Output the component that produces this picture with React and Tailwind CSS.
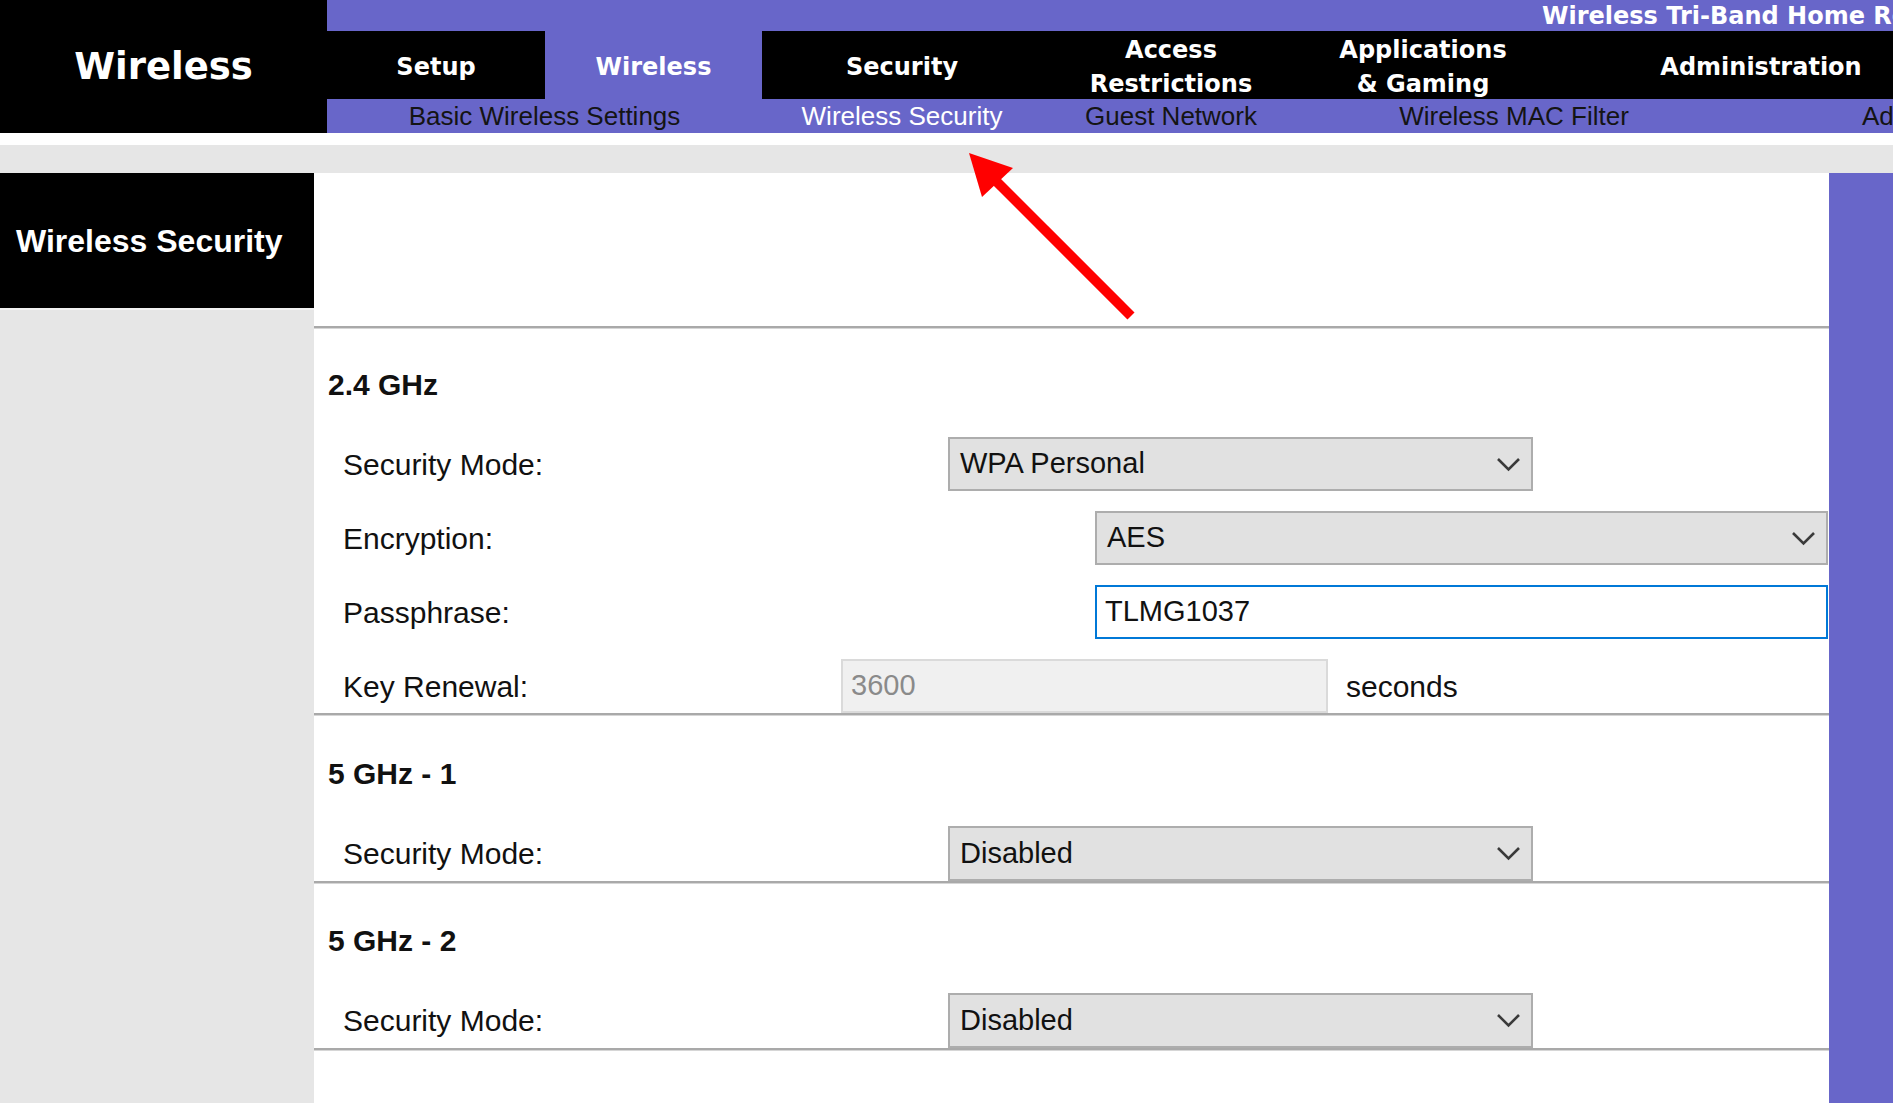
import React from "react";

const PURPLE = "bg-[#6866c9]";

function Chevron() {
  return (
    <svg width="25" height="15" viewBox="0 0 25 15" className="shrink-0">
      <polyline points="2,2 12.5,12.5 23,2" fill="none" stroke="#3a3a3a" strokeWidth="2.6" />
    </svg>
  );
}

function Select({ value, width, height = "h-[54px]" }) {
  return (
    <div
      className={`${width} ${height} border-2 border-[#adadad] bg-[#e1e1e1] flex items-center justify-between pl-[10px] pr-[10px] text-[29px] text-[#111]`}
    >
      <span>{value}</span>
      <Chevron />
    </div>
  );
}

function Line() {
  return <div className="h-[3px] bg-[#a9a9a9] border-b border-[#d6d6d6]" />;
}

function Title({ children, pt = "pt-[36px]" }) {
  return (
    <div className={`${pt} pl-[14px] leading-[40px] text-[30px] font-bold text-[#111]`}>{children}</div>
  );
}

function Label({ children, w }) {
  return <div className={`${w} shrink-0 pl-[29px] text-[30px] text-[#111]`}>{children}</div>;
}

export default function App() {
  return (
    <div
      className="relative w-[1893px] h-[1103px] overflow-hidden bg-white"
      style={{ fontFamily: '"Liberation Sans", Arial, sans-serif' }}
    >
      {/* Header */}
      <div className="flex h-[133px]">
        <div className="w-[327px] shrink-0 bg-black flex items-center justify-center">
          <span
            className="text-white text-[37px] font-bold"
            style={{ fontFamily: '"DejaVu Sans", Verdana, sans-serif' }}
          >
            Wireless
          </span>
        </div>
        <div className="flex-1 flex flex-col overflow-hidden">
          <div
            className={`h-[31px] ${PURPLE} pl-[1215px] whitespace-nowrap text-white text-[24px] font-bold leading-[33px]`}
            style={{ fontFamily: '"DejaVu Sans", Verdana, sans-serif' }}
          >
            Wireless Tri-Band Home Router
          </div>
          <div
            className="h-[68px] flex bg-black text-white text-[24px] font-bold leading-[34px] text-center whitespace-nowrap"
            style={{ fontFamily: '"DejaVu Sans", Verdana, sans-serif' }}
          >
            <div className="w-[218px] shrink-0 flex items-center justify-center bg-black pt-[4px]">Setup</div>
            <div className={`w-[217px] shrink-0 flex items-center justify-center pt-[4px] ${PURPLE}`}>Wireless</div>
            <div className="w-[280px] shrink-0 flex items-center justify-center pt-[4px]">Security</div>
            <div className="w-[258px] shrink-0 flex flex-col items-center justify-center pt-[4px]">
              <span>Access</span>
              <span>Restrictions</span>
            </div>
            <div className="w-[246px] shrink-0 flex flex-col items-center justify-center pt-[4px]">
              <span>Applications</span>
              <span>&amp; Gaming</span>
            </div>
            <div className="w-[430px] shrink-0 flex items-center justify-center pt-[4px]">Administration</div>
          </div>
          <div className={`h-[34px] ${PURPLE} flex items-center text-[26px] text-[#141414] whitespace-nowrap`}>
            <div className="w-[435px] shrink-0 text-center">Basic Wireless Settings</div>
            <div className="w-[280px] shrink-0 text-center text-white">Wireless Security</div>
            <div className="w-[258px] shrink-0 text-center">Guest Network</div>
            <div className="w-[428px] shrink-0 text-center">Wireless MAC Filter</div>
            <div className="shrink-0 pl-[134px]">Advanced Wireless Settings</div>
          </div>
        </div>
      </div>
      <div className="h-[12px] bg-white" />
      <div className="h-[28px] bg-[#e6e6e6]" />

      {/* Body */}
      <div className="flex h-[930px]">
        <div className="w-[314px] shrink-0 bg-[#e6e6e6] flex flex-col">
          <div className="h-[137px] bg-black flex items-center pl-[16px] border-b-2 border-[#f2f2f2]">
            <span className="text-white text-[32px] font-bold">Wireless Security</span>
          </div>
        </div>

        <div className="flex-1 bg-white flex flex-col">
          <div className="h-[153px]" />
          <Line />
          <Title>2.4 GHz</Title>
          <div className="mt-[32px] flex flex-col gap-[20px]">
            <div className="flex items-center h-[54px]">
              <Label w="w-[634px]">Security Mode:</Label>
              <Select value="WPA Personal" width="w-[585px]" />
            </div>
            <div className="flex items-center h-[54px]">
              <Label w="w-[781px]">Encryption:</Label>
              <Select value="AES" width="w-[733px]" />
            </div>
            <div className="flex items-center h-[54px]">
              <Label w="w-[781px]">Passphrase:</Label>
              <div className="w-[733px] h-[54px] border-2 border-[#0078d7] bg-white flex items-center pl-[8px] text-[29px] text-[#111]">
                TLMG1037
              </div>
            </div>
            <div className="flex items-center h-[54px]">
              <Label w="w-[527px]">Key Renewal:</Label>
              <div className="w-[487px] h-[54px] border-2 border-[#dadada] bg-[#f0f0f0] flex items-center pl-[8px] text-[29px] text-[#8a8a8a]">
                3600
              </div>
              <span className="ml-[18px] text-[30px] text-[#111]">seconds</span>
            </div>
          </div>
          <Line />
          <Title pt="pt-[38px]">5 GHz - 1</Title>
          <div className="mt-[32px] flex items-center h-[55px]">
            <Label w="w-[634px]">Security Mode:</Label>
            <Select value="Disabled" width="w-[585px]" height="h-[55px]" />
          </div>
          <Line />
          <Title pt="pt-[37px]">5 GHz - 2</Title>
          <div className="mt-[32px] flex items-center h-[55px]">
            <Label w="w-[634px]">Security Mode:</Label>
            <Select value="Disabled" width="w-[585px]" height="h-[55px]" />
          </div>
          <Line />
        </div>

        <div className={`w-[64px] shrink-0 ${PURPLE}`} />
      </div>

      {/* Red annotation arrow */}
      <svg
        className="absolute left-[955px] top-[140px] pointer-events-none"
        width="190"
        height="190"
        viewBox="0 0 190 190"
      >
        <line x1="40" y1="40" x2="176" y2="176" stroke="#ff0000" strokeWidth="10" />
        <polygon points="14,13 58,28 27,57" fill="#ff0000" />
      </svg>
    </div>
  );
}
